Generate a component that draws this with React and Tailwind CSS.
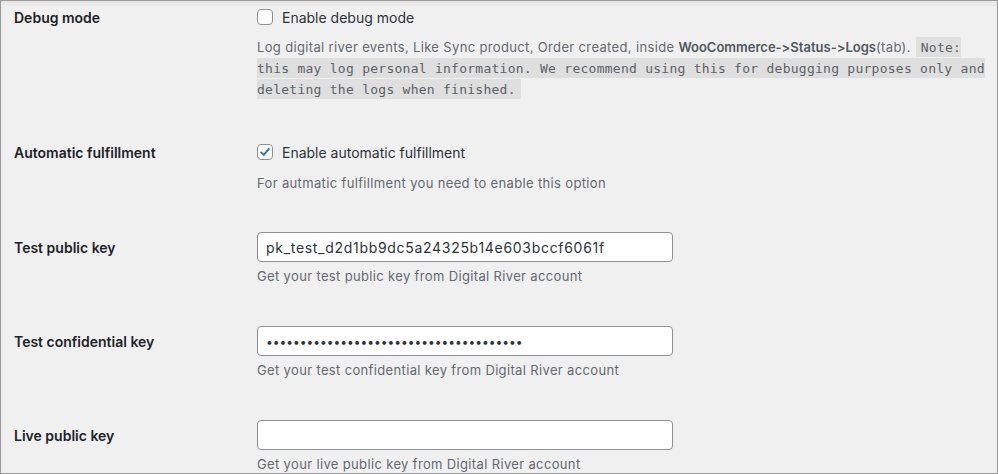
import React from 'react';

const Checkbox = ({ checked }) => (
  <span className="w-4 h-4 rounded-[4px] border border-[#8c8f94] bg-white flex items-center justify-center shrink-0">
    {checked && (
      <svg viewBox="0 0 16 16" className="w-[14px] h-[14px]" fill="none">
        <path d="M3.6 8.4 L6.6 11.3 L12.4 4.4" stroke="#2271b1" strokeWidth="2.1" strokeLinecap="round" strokeLinejoin="round" />
      </svg>
    )}
  </span>
);

const CheckRow = ({ label, text, checked, className }) => (
  <div className={'flex ' + className}>
    <div className="w-[243px] h-4 flex items-center text-[14px] font-semibold text-[#1d2327]">{label}</div>
    <label className="h-4 flex items-center gap-[9px] text-[14px] text-[#2c3338]">
      <Checkbox checked={checked} />
      {text}
    </label>
  </div>
);

const KeyRow = ({ label, value, type = 'text', help, className }) => (
  <div className={'flex ' + className}>
    <div className="w-[243px] h-[30px] flex items-center text-[14px] font-semibold text-[#1d2327]">{label}</div>
    <div className="flex flex-col">
      <input
        type={type}
        readOnly
        value={value}
        className={
          'w-[416px] h-[30px] px-2 rounded-[4px] border border-[#8c8f94] bg-white text-[#2c3338] outline-none ' +
          (type === 'password' ? 'text-[12px]' : 'text-[14px] tracking-[0.7px]')
        }
      />
      <p className="mt-1 text-[13px] leading-[21px] tracking-[0.35px] text-[#646970]">{help}</p>
    </div>
  </div>
);

export default function App() {
  return (
    <div className="w-[998px] h-[474px] overflow-hidden border border-[#9a9a9a] bg-[#f0f0f1] shadow-[inset_0_3px_4px_rgba(0,0,0,0.05)] pl-[13px] pt-2 font-['Inter',sans-serif]">
      <CheckRow label="Debug mode" text="Enable debug mode" checked={false} className="" />
      <div className="flex">
        <div className="w-[243px] shrink-0" />
        <p className="mt-3 w-[733px] text-[13px] leading-[21px] tracking-[0.35px] text-[#646970]">
          Log digital river events, Like Sync product, Order created, inside{' '}
          <strong className="font-semibold tracking-normal text-[#50575e] [font-feature-settings:'calt'_0]">WooCommerce-&gt;Status-&gt;Logs</strong>(tab).{' '}
          <code className="px-[5px] pt-[3px] pb-[2px] mx-px tracking-[0.26px] bg-[rgba(0,0,0,0.07)] text-[#5c6166] font-['DejaVu_Sans_Mono',monospace] text-[13px]">
            Note: this may log personal information. We recommend using this for debugging purposes only and deleting the logs when finished.
          </code>
        </p>
      </div>

      <CheckRow label="Automatic fulfillment" text="Enable automatic fulfillment" checked className="mt-[44px]" />
      <div className="flex">
        <div className="w-[243px] shrink-0" />
        <p className="mt-[13px] text-[13px] leading-[21px] tracking-[0.35px] text-[#646970]">For autmatic fulfillment you need to enable this option</p>
      </div>

      <KeyRow
        className="mt-[38px]"
        label="Test public key"
        value="pk_test_d2d1bb9dc5a24325b14e603bccf6061f"
        help="Get your test public key from Digital River account"
      />
      <KeyRow
        className="mt-[39px]"
        label="Test confidential key"
        type="password"
        value="sk_test_0123456789abcdef0123456789abcd"
        help="Get your test confidential key from Digital River account"
      />
      <KeyRow
        className="mt-[39px]"
        label="Live public key"
        value=""
        help="Get your live public key from Digital River account"
      />
    </div>
  );
}
